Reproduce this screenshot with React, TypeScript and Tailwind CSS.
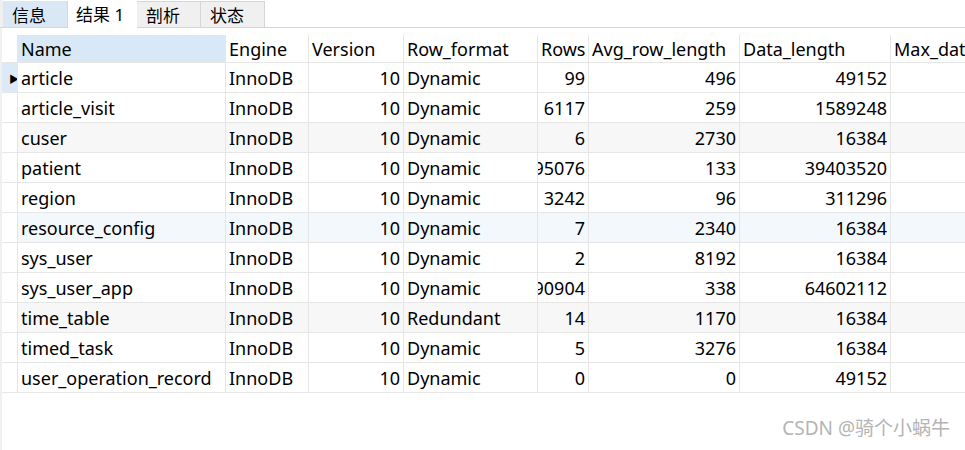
const rows: { name: string; rows: string; avg: string; data: string; fmt?: string; bg: string }[] = [
  { name: "article", rows: "99", avg: "496", data: "49152", bg: "bg-white" },
  { name: "article_visit", rows: "6117", avg: "259", data: "1589248", bg: "bg-white" },
  { name: "cuser", rows: "6", avg: "2730", data: "16384", bg: "bg-[#f7f7f7]" },
  { name: "patient", rows: "295076", avg: "133", data: "39403520", bg: "bg-white" },
  { name: "region", rows: "3242", avg: "96", data: "311296", bg: "bg-white" },
  { name: "resource_config", rows: "7", avg: "2340", data: "16384", bg: "bg-[#f3f8fd]" },
  { name: "sys_user", rows: "2", avg: "8192", data: "16384", bg: "bg-white" },
  { name: "sys_user_app", rows: "190904", avg: "338", data: "64602112", bg: "bg-white" },
  { name: "time_table", rows: "14", avg: "1170", data: "16384", fmt: "Redundant", bg: "bg-[#f7f7f7]" },
  { name: "timed_task", rows: "5", avg: "3276", data: "16384", bg: "bg-white" },
  { name: "user_operation_record", rows: "0", avg: "0", data: "49152", bg: "bg-white" },
];

const cols = "grid grid-cols-[16px_208px_83px_95px_134px_51px_151px_151px_1fr]";
const cell = "flex items-center overflow-hidden whitespace-nowrap border-r border-[#e6e6e6] px-[3px] pt-[2px]";
const num = `${cell} justify-end`;

function Tab({ label, kind }: { label: string; kind: "blue" | "active" | "gray" }) {
  const cls =
    kind === "active"
      ? "h-[28px] bg-white pl-[8px] pr-[10px] pt-[1px] w-[69px]"
      : kind === "blue"
      ? "mt-[1px] h-[27px] w-[65px] border-r border-b border-[#d6d6d6] bg-[#dae8f5] pl-[9px] pt-[2px]"
      : "mt-[1px] h-[27px] w-[64px] border-r border-t border-b border-[#d6d6d6] bg-[#f0f0f0] pl-[9px] pt-[2px]";
  return <div className={`flex items-center text-[17px] leading-none text-black ${cls}`}>{label}</div>;
}

export default function App() {
  return (
    <div
      className="relative flex h-[450px] w-[965px] flex-col overflow-hidden bg-white text-[18px] text-black"
      style={{ fontFamily: '"Noto Sans", "Noto Sans CJK SC", sans-serif' }}
    >
      <div className="flex h-[28px] items-start bg-white">
        <div className="h-[28px] w-[3px] border-b border-[#d6d6d6] bg-[#f0f0f0]" />
        <Tab label="信息" kind="blue" />
        <Tab label="结果 1" kind="active" />
        <Tab label="剖析" kind="gray" />
        <Tab label="状态" kind="gray" />
        <div className="h-[28px] flex-1 border-b border-[#d6d6d6]" />
      </div>
      <div className="flex flex-1">
        <div className="w-[2px] bg-[#f0f0f0]" />
        <div className="flex-1 pt-[7px]">
          <div className={`${cols} h-[28px] border-b border-[#e6e6e6]`}>
            <div className={cell} />
            <div className={`${cell} bg-[#d9e8f6]`}>Name</div>
            <div className={cell}>Engine</div>
            <div className={cell}>Version</div>
            <div className={cell}>Row_format</div>
            <div className={cell}>Rows</div>
            <div className={cell}>Avg_row_length</div>
            <div className={cell}>Data_length</div>
            <div className={`${cell} border-r-0`}>Max_data_length</div>
          </div>
          {rows.map((r, i) => (
            <div key={r.name} className={`${cols} h-[30px] border-b border-[#e6e6e6] ${r.bg}`}>
              <div className={`${cell} px-0 ${i === 0 ? "bg-[#dce9f6]" : "bg-white"}`}>
                {i === 0 && <span className="ml-[4px] text-[10px] leading-none">▶</span>}
              </div>
              <div className={cell}>{r.name}</div>
              <div className={cell}>InnoDB</div>
              <div className={num}>10</div>
              <div className={cell}>{r.fmt ?? "Dynamic"}</div>
              <div className={num}>{r.rows}</div>
              <div className={num}>{r.avg}</div>
              <div className={num}>{r.data}</div>
              <div className={`${cell} border-r-0`} />
            </div>
          ))}
        </div>
      </div>
      <div className="absolute bottom-[8px] right-[15px] text-[19px] text-[#b4b4b4]">CSDN @骑个小蜗牛</div>
    </div>
  );
}
